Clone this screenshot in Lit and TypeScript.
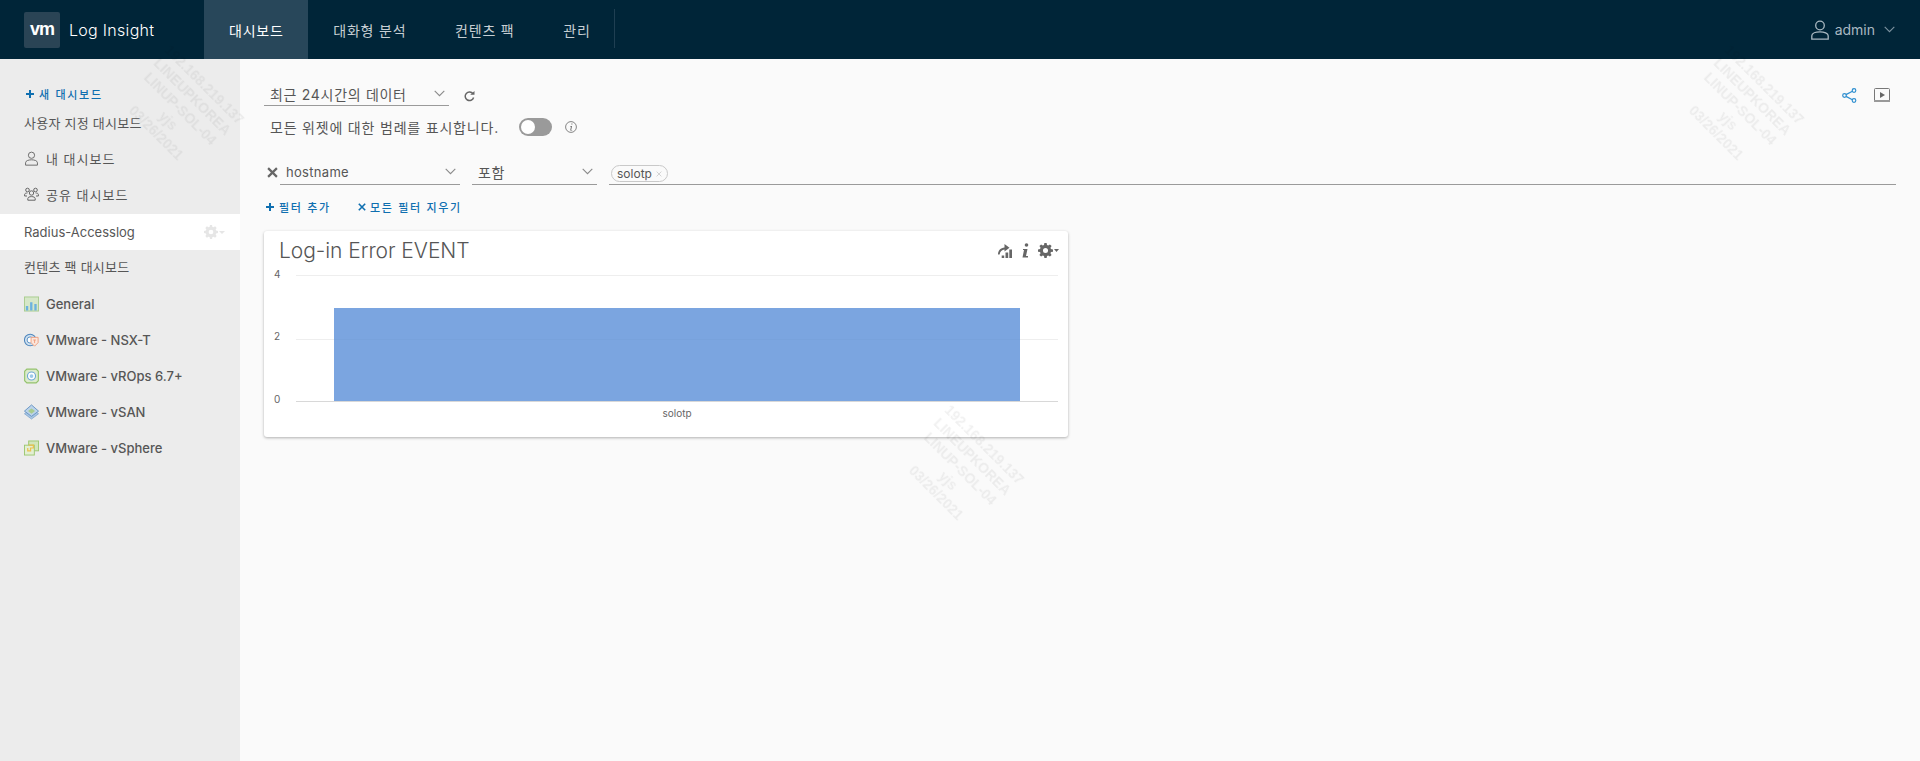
import { LitElement, html, css, svg } from "lit";
import { customElement } from "lit/decorators.js";

const chev = (w = 11, c = "#8a8a8a") => html`<svg class="chev" width=${w} height="7" viewBox="0 0 11 7"><path d="M.7.8 5.5 5.6 10.3.8" fill="none" stroke=${c} stroke-width="1.1"/></svg>`;
const person = (c: string, w: number, h: number) => html`<svg width=${w} height=${h} viewBox="0 0 18 20"><circle cx="9" cy="5.5" r="4.3" fill="none" stroke=${c} stroke-width="1.3"/><path d="M.8 19.2v-3.4c0-2.6 4-4 8.2-4s8.2 1.4 8.2 4v3.4z" fill="none" stroke=${c} stroke-width="1.3"/></svg>`;
const group = html`<svg width="15" height="14" viewBox="0 0 15 14" fill="none" stroke="#666" stroke-width="1"><circle cx="7.5" cy="6" r="2.2"/><path d="M3.8 13.2v-1.6c0-1.3 1.7-2 3.7-2s3.7.7 3.7 2v1.6z"/><circle cx="3.5" cy="3" r="1.8"/><circle cx="11.5" cy="3" r="1.8"/><path d="M3 9H.6V7.6C.6 6.4 2 6 3.4 6M12 9h2.4V7.6c0-1.2-1.4-1.6-2.8-1.6"/></svg>`;
const gear = (c: string, s: number) => html`<svg width=${s} height=${s} viewBox="0 0 16 16"><path fill=${c} d="M6.8 0h2.4l.4 2.2 1.3.5L12.700 1.500l1.800 1.800-1.200 1.800.5 1.300 2.200.4v2.400l-2.200.4-.5 1.300 1.200 1.800-1.800 1.800-1.800-1.200-1.300.5-.4 2.200H6.800l-.4-2.200-1.300-.5-1.800 1.200-1.800-1.800 1.200-1.800-.5-1.300L0 9.200V6.800l2.200-.4.5-1.300L1.500 3.300l1.800-1.800 1.800 1.200 1.300-.5zM8 5.300a2.700 2.700 0 1 0 0 5.400 2.700 2.700 0 0 0 0-5.400z"/></svg>`;
const xIcon = (s: number, c: string, w: number) => html`<svg width=${s} height=${s} viewBox="0 0 10 10"><path d="M1 1l8 8M9 1 1 9" stroke=${c} stroke-width=${w} fill="none"/></svg>`;
const plus = html`<svg width="8" height="8" viewBox="0 0 8 8"><path d="M4 0v8M0 4h8" stroke="#0f6fb0" stroke-width="2"/></svg>`;

const packIcons = [
  html`<svg width="16" height="16" viewBox="0 0 16 16"><rect x=".5" y=".5" width="15" height="15" fill="#d6e7c8" stroke="#a8cc8e"/><path d="M2 15V10h2.500v5zM6.500 15V6H9v9zM11 15V8h2.500v7z" fill="#6cb2de"/></svg>`,
  html`<svg width="17" height="16" viewBox="0 0 17 16"><circle cx="7" cy="8" r="6.500" fill="#cfe0ef" stroke="#4f87bd" stroke-width="1.200"/><circle cx="7" cy="8" r="3.500" fill="#fff" stroke="#4f87bd"/><path d="M8 5h8v6l-4 4-4-4z" fill="#fbe6dc" stroke="#ee9a78"/><path d="M10.500 8h3M12 8v3.500" stroke="#ee9a78"/></svg>`,
  html`<svg width="16" height="16" viewBox="0 0 16 16"><path d="M3 .7h10L15.300 3v10L13 15.300H3L.7 13V3z" fill="#dcebcc" stroke="#93c26b" stroke-width="1.200"/><circle cx="8" cy="8" r="4.300" fill="#fff" stroke="#6fa8d6" stroke-width="1.200"/><circle cx="8" cy="8" r="2" fill="#9cc9e8"/></svg>`,
  html`<svg width="17" height="16" viewBox="0 0 17 16"><path d="M8.500 4 16.500 10 8.500 16 .5 10z" fill="#a9c6e3" stroke="#6b97c4" stroke-width=".7"/><path d="M8.500 0 16.500 7 8.500 13 .5 7z" fill="#bcd3e9" stroke="#5f90c2"/><path d="M8.500 4 12.500 7 8.500 10 4.500 7z" fill="#a8cc8e"/></svg>`,
  html`<svg width="16" height="16" viewBox="0 0 16 16"><rect x="5" y=".5" width="10.500" height="10.500" fill="#d2e6bb" stroke="#9cc770"/><rect x=".5" y="5" width="10.500" height="10.500" fill="#e3efd3" stroke="#9cc770"/><path d="M5 5h5v3H7v3H4V8" fill="none" stroke="#ecc04d" stroke-width="1.300"/></svg>`,
];

@customElement("app-root")
export class AppRoot extends LitElement {
  static styles = css`
    :host { display: block; height: 100vh; min-height: 761px; position: relative; overflow: hidden; background: #fafafa; color: #565656; }
    * { box-sizing: border-box; }
    .page { display: grid; grid-template-rows: 59px 1fr; height: 100%; font-family: Inter, "Noto Sans CJK KR", "Noto Sans", sans-serif; }
    header { background: #002538; display: flex; align-items: stretch; color: #fff; }
    .brand { width: 204px; padding-left: 24px; display: flex; align-items: center; gap: 9px; flex: none; }
    .logo { width: 36px; height: 36px; border-radius: 2px; background: #2a4455; display: flex; align-items: center; justify-content: center; font: 700 18px/1 "Liberation Sans", sans-serif; letter-spacing: -1px; color: #fff; padding-bottom: 2px; }
    .brand-name { font-size: 16px; font-weight: 300; letter-spacing: .3px; }
    .tab { display: flex; align-items: center; padding: 0 23.700px 0 25px; font-size: 14px; color: #c6ced3; letter-spacing: .8px; }
    .tab.on { background: #28475a; color: #fff; padding-right: 24.500px; }
    .divider { width: 1px; height: 39px; margin-top: 9px; background: #1f3f52; }
    .user { margin-left: auto; padding-right: 25px; display: flex; align-items: center; gap: 6px; color: #a9b8c1; font-size: 14px; }
    .user .chev { margin-left: 3px; }
    .body { display: grid; grid-template-columns: 240px 1fr; min-height: 0; }
    aside { background: #ececec; padding-top: 24px; }
    .new { height: 23px; padding: 0 0 2px 26px; display: flex; align-items: center; gap: 5px; font-size: 11px; font-weight: 500; color: #0f6fb0; letter-spacing: 1.7px; }
    .row { height: 36px; display: flex; align-items: center; padding-left: 24px; gap: 7px; font-size: 13px; color: #565656; font-weight: 500; white-space: nowrap; }
    .row.ko { padding-bottom: 4px; font-weight: 400; letter-spacing: 1px; }
    .row.title { padding-bottom: 4px; font-weight: 400; letter-spacing: .25px; }
    .row.sel { background: #fff; font-weight: 400; justify-content: space-between; padding-right: 15px; }
    .row .ic { width: 15px; display: flex; justify-content: center; flex: none; }
    .gearwrap { display: flex; align-items: center; gap: 1px; }
    .gearwrap i { width: 0; height: 0; border: 3px solid transparent; border-top-color: #e6e6e6; margin-top: 3px; }
    main { padding: 25px 24px 0 24px; min-width: 0; }
    .time { display: flex; align-items: center; height: 22px; }
    .sel-box { display: flex; align-items: center; justify-content: space-between; border-bottom: 1px solid #9a9a9a; padding: 0 4px 0 6px; font-size: 14px; color: #565656; flex: none; }
    .sel-time { width: 185px; height: 22px; padding-bottom: 2px; letter-spacing: .7px; }
    .refresh { margin: 2px 0 0 15px; display: flex; }
    .actions { margin-left: auto; display: flex; align-items: center; gap: 17px; }
    .legend { margin-top: 10px; height: 22px; padding-left: 6px; display: flex; align-items: center; font-size: 14px; letter-spacing: .8px; }
    .toggle { width: 33px; height: 18px; border-radius: 9px; background: #9a9a9a; margin-left: 20px; padding: 2px; display: flex; }
    .toggle span { width: 14px; height: 14px; border-radius: 50%; background: #fff; }
    .info { margin-left: 13px; display: flex; }
    .filter { margin-top: 24px; height: 23px; display: flex; align-items: flex-end; }
    .fx { width: 16px; height: 23px; padding: 5px 0 0 3px; flex: none; display: flex; align-items: flex-start; }
    .sel-host { width: 180px; height: 22px; margin-right: 12px; padding-bottom: 4px; font-size: 13px; letter-spacing: .3px; }
    .sel-op { width: 125px; height: 22px; margin-right: 12px; padding-bottom: 4px; letter-spacing: .5px; }
    .chips { flex: 1; height: 23px; border-bottom: 1px solid #9a9a9a; padding-left: 2px; }
    .chip { display: inline-flex; align-items: center; gap: 4px; height: 17px; margin-top: 2px; border: 1px solid #c9c9c9; border-radius: 9px; padding: 0 5px; font-size: 12px; color: #565656; background: #fafafa; }
    .links { margin-top: 12px; height: 20px; display: flex; align-items: center; padding-left: 2px; font-size: 11px; font-weight: 500; color: #0f6fb0; letter-spacing: 1.700px; }
    .link { display: flex; align-items: center; gap: 5px; }
    .link + .link { margin-left: 27px; gap: 4px; }
    .card { margin-top: 14px; width: 804px; height: 206px; background: #fff; border-radius: 3px; box-shadow: 0 1px 3px rgba(0,0,0,.3); }
    .card-head { height: 36px; padding: 3px 9px 0 15px; display: flex; align-items: center; }
    .card-title { font-size: 21px; font-weight: 300; color: #565656; letter-spacing: -.05px; }
    .tools { margin-left: auto; display: flex; align-items: center; gap: 9px; }
    .chart { display: block; }
    .chart text { font-family: Inter, sans-serif; font-size: 10px; fill: #666; }
    .wm { position: absolute; pointer-events: none; transform: translate(-50%, -50%) rotate(45deg); text-align: center; font: 700 14px/17px "Liberation Sans", sans-serif; color: rgba(0,0,0,.06); white-space: nowrap; filter: blur(.6px); }
  `;

  private wm(x: number, y: number) {
    return html`<div class="wm" style="left:${x}px;top:${y}px">192.168.219.137<br>LINEUPKOREA<br>LINUP-SOL-04<br>yjs<br>03/26/2021</div>`;
  }

  private chart() {
    return svg`
      <line x1="32" x2="794" y1="8.500" y2="8.500" stroke="#eee"/>
      <line x1="32" x2="794" y1="72.500" y2="72.500" stroke="#eee"/>
      <rect x="70" y="41" width="686" height="93" fill="#7ba5e0"/>
      <line x1="70" x2="756" y1="72.500" y2="72.500" stroke="#78a2dc"/>
      <line x1="32" x2="794" y1="134.500" y2="134.500" stroke="#d8d8d8"/>
      <text x="10" y="11">4</text><text x="10" y="73">2</text><text x="10" y="136">0</text>
      <text x="413" y="150" text-anchor="middle">solotp</text>`;
  }

  render() {
    const packs = ["General", "VMware - NSX-T", "VMware - vROps 6.7+", "VMware - vSAN", "VMware - vSphere"];
    return html`
      <div class="page">
        <header>
          <div class="brand"><div class="logo">vm</div><div class="brand-name">Log Insight</div></div>
          <div class="tab on">대시보드</div><div class="tab">대화형 분석</div><div class="tab">컨텐츠 팩</div><div class="tab">관리</div>
          <div class="divider"></div>
          <div class="user">${person("#a9b8c1", 18, 20)}<span>admin</span>${chev(11, "#7d93a0")}</div>
        </header>
        <div class="body">
          <aside>
            <div class="new">${plus}<span>새 대시보드</span></div>
            <div class="row title">사용자 지정 대시보드</div>
            <div class="row ko"><span class="ic">${person("#666", 13, 15)}</span>내 대시보드</div>
            <div class="row ko"><span class="ic">${group}</span>공유 대시보드</div>
            <div class="row sel"><span>Radius-Accesslog</span><span class="gearwrap">${gear("#e6e6e6", 14)}<i></i></span></div>
            <div class="row title">컨텐츠 팩 대시보드</div>
            ${packs.map((p, i) => html`<div class="row"><span class="ic">${packIcons[i]}</span>${p}</div>`)}
          </aside>
          <main>
            <div class="time">
              <div class="sel-box sel-time"><span>최근 24시간의 데이터</span>${chev()}</div>
              <span class="refresh"><svg width="11" height="11" viewBox="0 0 11 11"><path d="M9 2.800A4.300 4.300 0 1 0 9.600 6.500" fill="none" stroke="#666" stroke-width="1.500"/><path d="M6.200 3.800h4.300V0z" fill="#666"/></svg></span>
              <div class="actions">
                <svg width="15" height="15" viewBox="0 0 15 15" fill="none" stroke="#2f8fd0" stroke-width="1.200"><circle cx="2.500" cy="7.500" r="1.800"/><circle cx="12" cy="2.500" r="1.800"/><circle cx="12" cy="12.500" r="1.800"/><path d="M4 6.600 10.400 3.300M4 8.400l6.400 3.300"/></svg>
                <svg style="margin-right:6px" width="16" height="14" viewBox="0 0 16 14"><rect x=".5" y=".5" width="15" height="13" rx="1" fill="none" stroke="#777"/><path d="M0 12h16v2H0z" fill="#999"/><path d="M6 4l5 3-5 3z" fill="#666"/></svg>
              </div>
            </div>
            <div class="legend">
              <span>모든 위젯에 대한 범례를 표시합니다.</span>
              <div class="toggle"><span></span></div>
              <span class="info"><svg width="12" height="12" viewBox="0 0 12 12"><circle cx="6" cy="6" r="5.400" fill="none" stroke="#777" stroke-width=".9"/><path d="M6.400 2.500h1v1.100h-1zM5 5h2L6.200 9H7.200v.6H5.200L6 5.600H5z" fill="#666"/></svg></span>
            </div>
            <div class="filter">
              <div class="fx">${xIcon(11, "#666", 2)}</div>
              <div class="sel-box sel-host"><span>hostname</span>${chev()}</div>
              <div class="sel-box sel-op"><span>포함</span>${chev()}</div>
              <div class="chips"><span class="chip">solotp ${xIcon(6, "#bbb", 1)}</span></div>
            </div>
            <div class="links">
              <div class="link">${plus}<span>필터 추가</span></div>
              <div class="link">${xIcon(8, "#0f6fb0", 2)}<span>모든 필터 지우기</span></div>
            </div>
            <div class="card">
              <div class="card-head">
                <div class="card-title">Log-in Error EVENT</div>
                <div class="tools">
                  <svg width="15" height="14" viewBox="0 0 15 14" fill="#666"><path d="M3.700 11.500H6.200V14H3.700zM7.500 8.500H10.200V14H7.500zM11.300 5.500H14V14H11.300z"/><path d="M0 10.500C0 6.500 2.800 4 6.500 3.600V0L11.500 3.800 6.500 7.500V5.500C4 5.800 2 7.500 1.600 10.500z"/></svg>
                  <svg width="7" height="15" viewBox="0 0 7 15" fill="#666"><circle cx="4.500" cy="2" r="1.800"/><path d="M1 6h4.500L4 13h2v1.500H.5L2 7H1z"/></svg>
                  <span class="gearwrap">${gear("#666", 15)}<svg width="5" height="3" viewBox="0 0 5 3"><path d="M0 0h5L2.500 3z" fill="#666"/></svg></span>
                </div>
              </div>
              <svg class="chart" width="804" height="170" viewBox="0 0 804 170">${this.chart()}</svg>
            </div>
          </main>
        </div>
      </div>
      ${this.wm(180, 109)}${this.wm(1740, 109)}${this.wm(960, 469)}
    `;
  }
}
